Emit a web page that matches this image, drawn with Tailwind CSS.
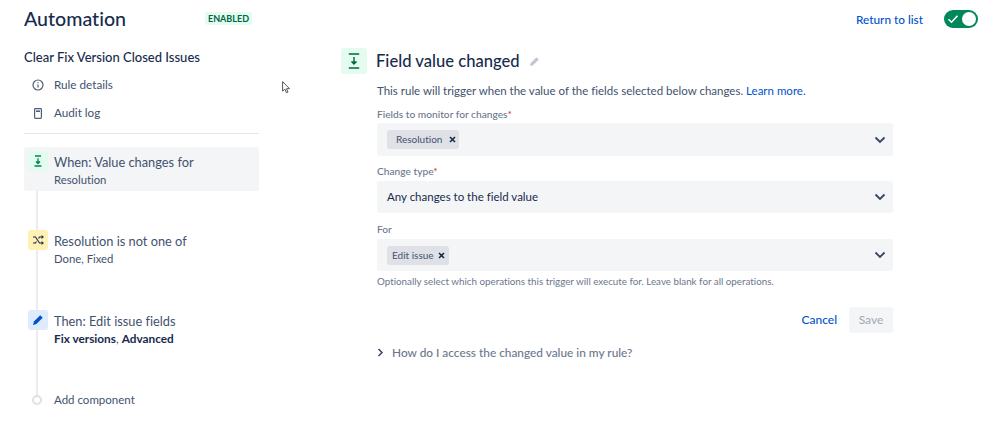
<!DOCTYPE html>
<html lang="en">
  <head>
    <meta charset="UTF-8" />
    <title>Automation</title>
    <script src="https://cdn.jsdelivr.net/npm/@tailwindcss/browser@4"></script>
  </head>
  <body class="bg-white font-['Lato',sans-serif] [font-variant-ligatures:none] text-[#172b4d]">
    <div class="w-[999px] h-[421px] overflow-hidden relative">
      <!-- Header -->
      <div class="flex items-center h-[40px] pl-[24px] pr-[21px]">
        <h1 class="text-[19.6px] leading-[38px] mb-[2px] font-medium w-[181px]">Automation</h1>
        <span class="h-[13px] mb-[3px] px-[3px] rounded-[3px] bg-[#e3fcef] text-[#006644] text-[9px] leading-[13px] font-bold">ENABLED</span>
        <a class="ml-auto text-[11.8px] font-medium text-[#0052cc]">Return to list</a>
        <div class="ml-[21px] mb-[2px] w-[34px] h-[18px] rounded-full bg-[#00875a] flex items-center justify-between px-[2px]">
          <svg width="14" height="14" viewBox="0 0 14 14" fill="none" stroke="#fff" stroke-width="1.6"><path d="M2.500 7.200l3 3 6-6.500"/></svg>
          <span class="w-[14px] h-[14px] rounded-full bg-white"></span>
        </div>
      </div>

      <div class="flex">
        <!-- Sidebar -->
        <aside class="w-[235px] ml-[24px] shrink-0">
          <h2 class="mt-[8px] text-[13px] leading-[18px] font-medium">Clear Fix Version Closed Issues</h2>
          <div class="mt-[10px] flex items-center h-[18px] pl-[8px] gap-[10px] text-[11.7px] text-[#42526e]">
            <svg width="12" height="12" viewBox="0 0 12 12" fill="none" stroke="#505f79" stroke-width="1.2"><circle cx="6" cy="6" r="5"/><path d="M6 5.4v3M6 3.2v1"/></svg>
            <span>Rule details</span>
          </div>
          <div class="mt-[10px] flex items-center h-[18px] pl-[10px] gap-[12px] text-[11.7px] text-[#42526e]">
            <svg width="8" height="11" viewBox="0 0 8 11" fill="none" stroke="#505f79" stroke-width="1.2"><rect x=".6" y=".6" width="6.8" height="9.8" rx=".8"/><path d="M2 3.2h4" stroke-width="1.6"/></svg>
            <span>Audit log</span>
          </div>
          <div class="mt-[11px] h-[1px] bg-[#e4e6ea]"></div>

          <!-- Rule steps -->
          <div class="relative mt-[13px]">
            <div class="absolute left-[12px] top-[20px] w-[2px] h-[228px] bg-[#ebecf0]"></div>
            <div class="relative h-[44px] rounded-[3px] bg-[#f4f5f7] flex pt-[4px] pl-[4px]">
              <div class="w-[20px] h-[20px] rounded-[3px] bg-[#e3fcef] flex items-center justify-center">
                <svg width="10" height="12" viewBox="0 0 10 12" fill="none" stroke="#00875a" stroke-width="1.3"><path d="M2 1h6M1.500 11h7M5 3.200v5"/><path d="M3 6.500l2 2 2-2" fill="#00875a"/></svg>
              </div>
              <div class="ml-[6px]">
                <div class="text-[12.8px] leading-[22px] text-[#42526e]">When: Value changes for</div>
                <div class="text-[11.3px] leading-[14px] text-[#42526e]">Resolution</div>
              </div>
            </div>
            <div class="relative flex pl-[4px] mt-[39px] h-[80px]">
              <div class="w-[20px] h-[20px] rounded-[3px] bg-[#fff0b3] flex items-center justify-center">
                <svg width="12" height="10" viewBox="0 0 12 10" fill="none" stroke="#172b4d" stroke-width="1.1"><path d="M1 2h2.500l4 6H11M1 8h2.500l1-1.500M6.500 3.500l1-1.500H11"/><path d="M9.500 .6L11.200 2 9.500 3.400M9.500 6.600L11.200 8 9.500 9.400"/></svg>
              </div>
              <div class="ml-[6px]">
                <div class="text-[12.8px] leading-[22px] text-[#42526e]">Resolution is not one of</div>
                <div class="text-[11.3px] leading-[14px] text-[#42526e]">Done, Fixed</div>
              </div>
            </div>
            <div class="relative flex pl-[4px] h-[70px]">
              <div class="w-[20px] h-[20px] rounded-[3px] bg-[#deebff] flex items-center justify-center">
                <svg width="12" height="12" viewBox="0 0 12 12" fill="#0052cc"><path d="M8.200 1.300l2.500 2.500-6.300 6.300-3.300.8.800-3.300z"/></svg>
              </div>
              <div class="ml-[6px]">
                <div class="text-[12.8px] leading-[22px] text-[#42526e]">Then: Edit issue fields</div>
                <div class="text-[11.8px] leading-[14px] text-[#42526e]"><b class="text-[#172b4d]">Fix versions</b>, <b class="text-[#172b4d]">Advanced</b></div>
              </div>
            </div>
            <div class="relative flex items-center h-[18px] pl-[8px] mt-[11px]">
              <span class="w-[10px] h-[10px] rounded-full border-[2px] border-[#dfe1e6] bg-white"></span>
              <span class="ml-[12px] text-[11.5px] text-[#42526e]">Add component</span>
            </div>
          </div>
        </aside>

        <!-- Trigger form -->
        <main class="ml-[82px] mt-[8px] w-[552px] flex gap-[10px] items-start">
          <div class="w-[26px] h-[26px] rounded-[3px] bg-[#e3fcef] flex items-center justify-center shrink-0">
            <svg width="12" height="16" viewBox="0 0 12 16" fill="none" stroke="#006644" stroke-width="1.4"><path d="M.8 1h10.400M.8 15h10.400M6 4v7"/><path d="M3.500 8.500L6 11l2.500-2.500" fill="#006644"/></svg>
          </div>
          <div class="w-[516px]">
            <div class="flex items-center h-[26px] gap-[9px] -ml-[1px]">
              <h2 class="text-[16.6px] font-medium leading-[26px]">Field value changed</h2>
              <svg width="11" height="11" viewBox="0 0 12 12" fill="#c1c7d0"><path d="M8.200 1.300l2.500 2.500-6.300 6.300-3.300.8.800-3.300z"/></svg>
            </div>
            <p class="mt-[8px] text-[11.5px] leading-[18px] text-[#42526e]">This rule will trigger when the value of the fields selected below changes. <a class="text-[#0052cc]">Learn more.</a></p>
            <label class="block mt-[7px] text-[10.2px] leading-[14px] font-medium text-[#6b778c]">Fields to monitor for changes<span class="text-[#de350b]">*</span></label>
            <div class="mt-[2px] h-[33px] rounded-[3px] bg-[#f4f5f7] flex items-center pl-[10px] pr-[7px]">
              <span class="h-[19px] w-[72px] whitespace-nowrap rounded-[3px] bg-[#dfe1e6] flex items-center pl-[9px] gap-[7px] text-[10px] text-[#42526e]">Resolution
                <svg width="7" height="7" viewBox="0 0 7 7" stroke="#172b4d" stroke-width="1.600" class="shrink-0"><path d="M1 1l5 5M6 1L1 6"/></svg>
              </span>
              <svg class="ml-auto" width="12" height="8" viewBox="0 0 12 8" fill="none" stroke="#344563" stroke-width="1.800"><path d="M1.500 1.500L6 6l4.500-4.500"/></svg>
            </div>
            <label class="block mt-[8px] text-[10.2px] leading-[14px] font-medium text-[#6b778c]">Change type<span class="text-[#de350b]">*</span></label>
            <div class="mt-[3px] h-[32px] rounded-[3px] bg-[#f4f5f7] flex items-center pl-[10px] pr-[7px] text-[11.5px] text-[#172b4d]">
              <span>Any changes to the field value</span>
              <svg class="ml-auto" width="12" height="8" viewBox="0 0 12 8" fill="none" stroke="#344563" stroke-width="1.800"><path d="M1.500 1.500L6 6l4.500-4.500"/></svg>
            </div>
            <label class="block mt-[9px] text-[10.2px] leading-[14px] font-medium text-[#6b778c]">For</label>
            <div class="mt-[3px] h-[32px] rounded-[3px] bg-[#f4f5f7] flex items-center pl-[10px] pr-[7px]">
              <span class="h-[19px] w-[62px] whitespace-nowrap rounded-[3px] bg-[#dfe1e6] flex items-center pl-[5px] gap-[4px] text-[10px] text-[#42526e]">Edit issue
                <svg width="7" height="7" viewBox="0 0 7 7" stroke="#172b4d" stroke-width="1.600" class="shrink-0"><path d="M1 1l5 5M6 1L1 6"/></svg>
              </span>
              <svg class="ml-auto" width="12" height="8" viewBox="0 0 12 8" fill="none" stroke="#344563" stroke-width="1.800"><path d="M1.500 1.500L6 6l4.500-4.500"/></svg>
            </div>
            <p class="mt-[3px] text-[9.8px] leading-[14px] text-[#6b778c]">Optionally select which operations this trigger will execute for. Leave blank for all operations.</p>
            <div class="mt-[19px] flex items-center justify-end h-[26px] gap-[12px]">
              <a class="text-[12px] font-medium text-[#0052cc]">Cancel</a>
              <span class="w-[44px] h-[26px] rounded-[3px] bg-[#f4f5f7] text-[#a5adba] text-[12px] font-medium flex items-center justify-center">Save</span>
            </div>
            <div class="mt-[11px] flex items-center gap-[8px] text-[11.85px] font-medium text-[#6b778c]">
              <svg width="7" height="9" viewBox="0 0 7 9" fill="none" stroke="#344563" stroke-width="1.500"><path d="M1.500 1l3.500 3.500L1.500 8"/></svg>
              <span>How do I access the changed value in my rule?</span>
            </div>
          </div>
        </main>
      </div>

      <!-- Mouse pointer over the page -->
      <svg class="absolute left-[282px] top-[81px]" width="9" height="13" viewBox="0 0 9 13" fill="#fff" stroke="#444" stroke-width=".9"><path d="M.6.6v9.500l2.300-1.900 1.500 3.500 1.600-.7-1.500-3.300h3z"/></svg>
    </div>
  </body>
</html>
